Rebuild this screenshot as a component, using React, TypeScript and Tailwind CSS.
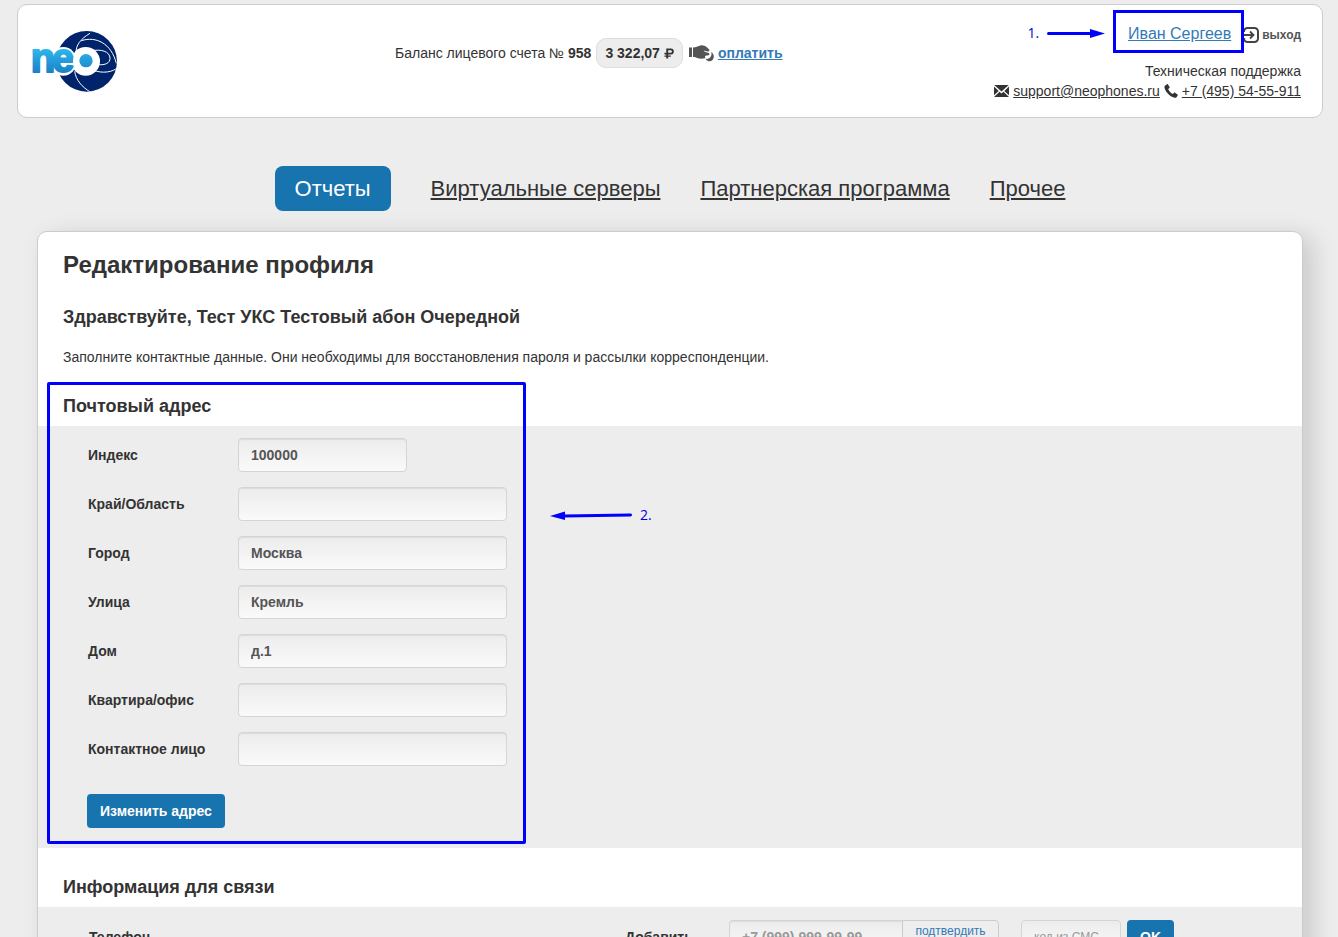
import React from 'react';

const link = 'text-[#337ab7] underline';
const field =
  'h-[34px] rounded-[4px] border border-[#d5d5d5] bg-linear-to-b from-[#ececec] to-[#fafafa] px-3 text-sm font-bold text-[#555] shadow-[inset_0_1px_1px_rgba(0,0,0,0.075)] outline-none placeholder:text-[#999]';

function Logo() {
  return (
    <svg className="h-[63px] w-[86px]" viewBox="66 90 258 189" role="img" aria-label="neo">
      <defs>
        <linearGradient id="sky" x1="0" y1="150" x2="0" y2="220" gradientUnits="userSpaceOnUse">
          <stop offset="0" stopColor="#2db4e8" />
          <stop offset="1" stopColor="#1b7fc9" />
        </linearGradient>
        <clipPath id="globe">
          <circle cx="230" cy="184" r="91" />
        </clipPath>
      </defs>
      <circle cx="230" cy="184" r="91" fill="#00246b" />
      <g fill="none" stroke="#fff" strokeWidth="3" clipPath="url(#globe)">
        <path d="M198 158C198 136 210 118 240 100" />
        <path d="M214 122C258 108 304 130 319 190" />
        <path d="M244 153C272 146 300 154 300 175C300 189 286 196 264 194" />
        <path d="M194 214C198 240 214 260 244 278" />
        <path d="M244 206C262 220 300 220 319 206" />
      </g>
      <circle cx="227" cy="184" r="43" fill="#fff" />
      <ellipse cx="160" cy="184" rx="40" ry="43" fill="#fff" />
      <g
        fontFamily="'Liberation Sans Narrow', 'Liberation Sans', sans-serif"
        fontWeight="700"
        fontSize="120"
        strokeLinejoin="round"
        fill="url(#sky)"
        stroke="url(#sky)"
        strokeWidth="6"
      >
        <text x="62" y="215">n</text>
        <text x="126" y="215">e</text>
      </g>
      <circle cx="227" cy="184" r="38" fill="#fff" />
      <circle cx="228" cy="182" r="20" fill="url(#sky)" />
    </svg>
  );
}

function Ruble() {
  return (
    <svg className="h-[11px] w-[10px]" viewBox="0 0 11 11" aria-label="руб.">
      <path fill="#333" fillRule="evenodd" d="M2.5 0H7.5A3.2 3.2 0 0 1 7.5 6.6H4.6V7.6H7.5V9.2H4.6V11H2.5V9.2H0.5V7.6H2.5V6.6H0.5V4.8H2.5zM4.6 1.9V4.8H7.3A1.4 1.4 0 0 0 7.3 1.9z" />
    </svg>
  );
}

function HandCoin() {
  return (
    <svg className="h-[17px] w-[25px]" viewBox="0 0 25 17" aria-hidden="true">
      <path fill="#555" d="M0 2.5h3v9.5H0zM4 2.5C7 2.5 9 1 11.5 0.4C14 0 16 0.8 17.5 2L20 4.3C21 5.6 20 6.8 18.5 6.4L14.5 5.5C15.5 7.4 18 7.2 20 8.2C21 9.4 20.3 10.6 17 10.5C15.8 11 15.8 12.3 16.4 13.2C13 13.8 11 13.8 9 13.2C7 12.4 6 12 4 12z" />
      <path fill="#555" d="M22.3 7C24 8 25 10 24.8 12C24.5 15 22 16.8 19.5 16.2C18 15.8 17 15 16.8 13.8C20 14.6 23.4 11.8 22.3 7z" />
    </svg>
  );
}

function ExitIcon() {
  return (
    <svg className="h-4 w-4" viewBox="0 0 16 16" aria-hidden="true" fill="none" stroke="#444" strokeWidth="2">
      <path d="M1 5V4.5A3.5 3.5 0 0 1 4.5 1h7A3.5 3.5 0 0 1 15 4.5v7a3.5 3.5 0 0 1-3.5 3.5h-7A3.5 3.5 0 0 1 1 11.5V11" />
      <path d="M0 8h10M7 4.5L10.5 8L7 11.5" strokeWidth="1.8" />
    </svg>
  );
}

function Mail() {
  return (
    <svg className="h-3 w-[15px]" viewBox="0 0 15 12" aria-hidden="true">
      <path fill="#333" d="M0.3 0h14.4L7.5 6.6zM0 1.6L4.7 6L0 10.3zM15 1.6L10.3 6L15 10.3zM5.5 6.8L7.5 8.6L9.5 6.8L15 12H0z" />
    </svg>
  );
}

function Phone() {
  return (
    <svg className="h-[14px] w-[14px]" viewBox="0 0 14 14" aria-hidden="true">
      <path fill="#333" d="M1.2 1.4L3 0.2C3.4 0 3.7 0.1 4 0.5L5.6 3C5.8 3.4 5.7 3.8 5.4 4L4.2 4.9C4.8 6.8 7 9.2 9 10L10 8.8C10.3 8.5 10.6 8.4 11 8.7L13.5 10.5C13.9 10.8 14 11.1 13.7 11.5L12.5 13.2C12 13.8 11.4 13.9 10.5 13.7C5.5 12.3 1.2 7.6 0.4 3.2C0.3 2.4 0.6 1.8 1.2 1.4z" />
    </svg>
  );
}

const nav = ['Виртуальные серверы', 'Партнерская программа', 'Прочее'];

const address = [
  { id: 'zip', label: 'Индекс', value: '100000', short: true },
  { id: 'region', label: 'Край/Область', value: '' },
  { id: 'city', label: 'Город', value: 'Москва' },
  { id: 'street', label: 'Улица', value: 'Кремль' },
  { id: 'house', label: 'Дом', value: 'д.1' },
  { id: 'flat', label: 'Квартира/офис', value: '' },
  { id: 'person', label: 'Контактное лицо', value: '' },
];

export default function App() {
  return (
    <div className="min-h-screen overflow-hidden bg-[#ededed] pt-1 pr-[15px] pl-[17px] font-['Liberation_Sans',Arial,sans-serif] text-sm leading-5 text-[#333]">
      <header className="flex items-start rounded-[10px] border border-[#ccc] bg-white pr-[21px] pb-4 pl-[14px]">
        <a href="#" className="mt-[25px] w-[363px] shrink">
          <Logo />
        </a>
        <div className="mt-[33px] flex items-center whitespace-nowrap">
          <span>
            Баланс лицевого счета № <b>958</b>
          </span>
          <b className="ml-[5px] flex h-[30px] items-center gap-1 rounded-[10px] border border-[#ddd] bg-[#ededed] px-2">
            3 322,07 <Ruble />
          </b>
          <a href="#" className={`ml-[6px] flex items-center gap-1 font-bold ${link}`}>
            <HandCoin />
            <span>оплатить</span>
          </a>
        </div>
        <div className="ml-auto flex flex-col items-end whitespace-nowrap">
          <div className="mt-[18px] flex items-center">
            <div className="relative">
              <a href="#" className={`text-base leading-5 ${link}`}>
                Иван Сергеев
              </a>
              <div className="pointer-events-none absolute -top-[14px] -right-[13px] -bottom-[9px] -left-[15px] z-10 border-[3px] border-[#0000ff]" />
              <div className="pointer-events-none absolute -top-px right-full mr-[23px] flex items-center gap-2 font-['Open_Sans',sans-serif] text-[#0000dd]">
                1.
                <svg className="h-[9px] w-[58px]" viewBox="0 0 58 9" aria-hidden="true">
                  <path d="M1.5 4.5H44" stroke="#00f" strokeWidth="3" strokeLinecap="round" />
                  <path d="M43 0L58 4.5L43 9z" fill="#00f" />
                </svg>
              </div>
            </div>
            <a href="#" className="ml-3 flex items-center gap-[3px] pt-[2px] text-xs leading-5 font-bold text-[#555]">
              <ExitIcon />
              выход
            </a>
          </div>
          <div className="mt-4">Техническая поддержка</div>
          <div className="flex items-center gap-1">
            <Mail />
            <a href="mailto:support@neophones.ru" className="underline">
              support@neophones.ru
            </a>
            <Phone />
            <a href="tel:+74955455911" className="underline">
              +7 (495) 54-55-911
            </a>
          </div>
        </div>
      </header>

      <nav className="mt-12 flex justify-center gap-10 text-[22px] leading-[45px]">
        <a href="#" className="rounded-lg bg-[#1874ae] px-5 text-white">
          Отчеты
        </a>
        {nav.map((item) => (
          <a key={item} href="#" className="underline">
            {item}
          </a>
        ))}
      </nav>

      <main className="mx-5 mt-5 rounded-[10px] border border-[#ccc] bg-white pb-10 shadow-[10px_5px_25px_rgba(0,0,0,0.15)]">
        <div className="px-[25px] pt-[18px]">
          <h1 className="text-2xl leading-[30px] font-bold">Редактирование профиля</h1>
          <h2 className="mt-[27px] text-lg leading-5 font-bold">Здравствуйте, Тест УКС Тестовый абон Очередной</h2>
          <p className="mt-5">Заполните контактные данные. Они необходимы для восстановления пароля и рассылки корреспонденции.</p>
        </div>

        <section className="relative mt-[29px]">
          <h2 className="px-[25px] pb-[10px] text-lg leading-5 font-bold">Почтовый адрес</h2>
          <form className="bg-[#ededed] pt-3 pb-5 pl-[50px]">
            <div className="flex flex-col gap-[15px]">
              {address.map((f) => (
                <div key={f.id} className="flex items-center">
                  <label htmlFor={f.id} className="w-[150px] font-bold">
                    {f.label}
                  </label>
                  <input id={f.id} defaultValue={f.value} className={`${field} ${f.short ? 'w-[169px]' : 'w-[269px]'}`} />
                </div>
              ))}
            </div>
            <button type="button" className="mt-7 -ml-px block h-[34px] rounded-[4px] bg-[#1874ae] px-[13px] font-bold text-white">
              Изменить адрес
            </button>
          </form>
          <div className="pointer-events-none absolute -top-[14px] bottom-1 left-[9px] w-[479px] rounded-[2px] border-[3px] border-[#0000ff]" />
          <div className="pointer-events-none absolute top-[109px] left-[512px] flex items-center gap-2 font-['Open_Sans',sans-serif] text-[#0000dd]">
            <svg className="h-[9px] w-[82px]" viewBox="0 0 82 9" aria-hidden="true">
              <path d="M14 5L80.5 4" stroke="#00f" strokeWidth="3" strokeLinecap="round" />
              <path d="M0 5L15 0.5V9z" fill="#00f" />
            </svg>
            2.
          </div>
        </section>

        <section className="mt-[29px]">
          <h2 className="px-[25px] pb-[10px] text-lg leading-5 font-bold">Информация для связи</h2>
          <form className="flex items-center bg-[#ededed] pt-[13px] pb-5 pl-[51px]">
            <span className="w-[536px] font-bold">Телефон</span>
            <label htmlFor="phone" className="w-[104px] font-bold">
              Добавить
            </label>
            <input id="phone" placeholder="+7 (999) 999-99-99" className={`${field} w-[173px] rounded-r-none border-r-0`} />
            <button type="button" className="h-[34px] w-[97px] rounded-r-[4px] border border-[#ccc] bg-[#eee] pb-3 text-xs text-[#337ab7]">
              подтвердить
            </button>
            <input aria-label="Код из СМС" placeholder="код из СМС" className="ml-[22px] h-[34px] w-[100px] rounded-[4px] border border-[#d5d5d5] bg-linear-to-b from-[#ececec] to-[#fafafa] px-3 text-xs outline-none placeholder:text-[#999]" />
            <button type="button" className="ml-[6px] h-[34px] rounded-[4px] bg-[#1874ae] px-[13px] font-bold text-white">
              OK
            </button>
          </form>
        </section>
      </main>
    </div>
  );
}
